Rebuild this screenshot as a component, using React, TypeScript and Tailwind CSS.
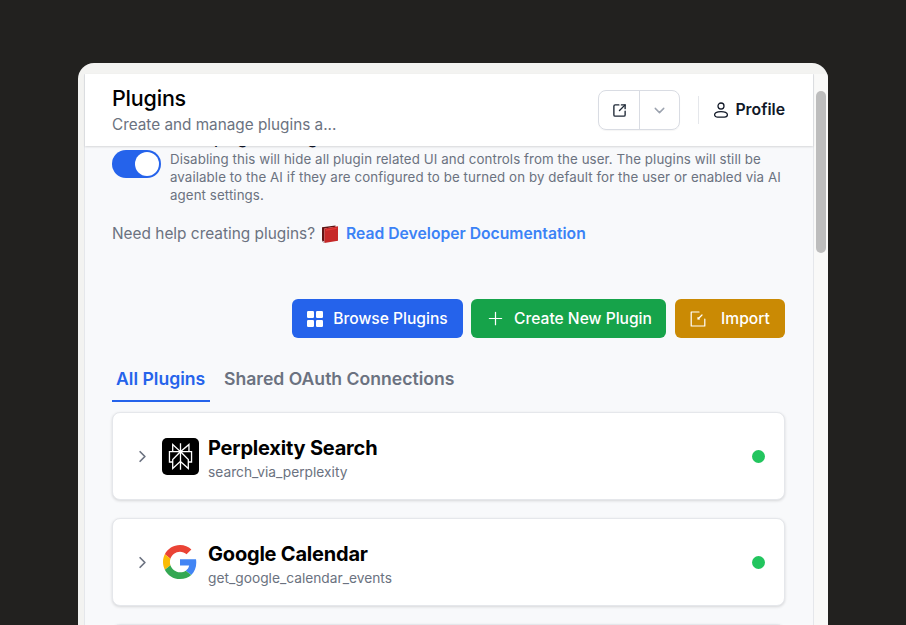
import React from "react";
import { ChevronDown, ChevronRight, Plus, SquareArrowOutUpRight } from "lucide-react";
import { SiPerplexity } from "react-icons/si";

const GoogleLogo = () => (
  <svg viewBox="0 0 48 48" className="-ml-px h-[34px] w-[34px]">
    <path fill="#EA4335" d="M24 9.5c3.54 0 6.71 1.22 9.21 3.6l6.85-6.85C35.9 2.38 30.47 0 24 0 14.62 0 6.51 5.38 2.56 13.22l7.98 6.19C12.43 13.72 17.74 9.5 24 9.5z" />
    <path fill="#4285F4" d="M46.98 24.55c0-1.57-.15-3.09-.38-4.55H24v9.02h12.94c-.58 2.96-2.26 5.48-4.78 7.18l7.73 6c4.51-4.18 7.09-10.36 7.09-17.65z" />
    <path fill="#FBBC05" d="M10.53 28.59c-.48-1.45-.76-2.99-.76-4.59s.27-3.14.76-4.59l-7.98-6.19C.92 16.46 0 20.12 0 24c0 3.88.92 7.54 2.56 10.78l7.97-6.19z" />
    <path fill="#34A853" d="M24 48c6.48 0 11.93-2.13 15.89-5.81l-7.73-6c-2.15 1.45-4.92 2.3-8.16 2.3-6.26 0-11.57-4.22-13.47-9.91l-7.98 6.19C6.51 42.62 14.62 48 24 48z" />
  </svg>
);

const RedBook = () => (
  <svg viewBox="0 0 18 18" className="h-[18px] w-[18px] shrink-0">
    <path fill="#5f1414" d="M1 2.2 14.5.4v1.4L3.4 3.6V18L1 16.2z" />
    <path fill="#c62828" d="M3.4 3.4 17 1.2v14.6L3.4 18z" />
    <path fill="#e53935" d="M5 4.6 15.6 2.8v1.2L5 5.8z" />
    <path fill="#e5e7eb" d="M1.4 15.4 3.4 16.8V18l-2-1.4z" />
  </svg>
);

const GridIcon = () => (
  <svg viewBox="0 0 16 16" className="h-4 w-4 fill-white">
    <rect x="0" y="0" width="7" height="7" rx="1.2" />
    <rect x="9" y="0" width="7" height="7" rx="1.2" />
    <rect x="0" y="9" width="7" height="7" rx="1.2" />
    <rect x="9" y="9" width="7" height="7" rx="1.2" />
  </svg>
);

const ImportIcon = () => (
  <svg viewBox="0 0 16 16" className="h-4 w-4 fill-none stroke-white" strokeWidth="1.2" strokeLinecap="round" strokeLinejoin="round">
    <path d="M9 1H1.2v14h13.6V8" />
    <path d="M8 8l4-4M9.4 8H8V6.6" />
  </svg>
);

const UserIcon = () => (
  <svg viewBox="0 0 16 16" className="h-4 w-4 fill-none stroke-[#111827]" strokeWidth="1.3">
    <circle cx="8" cy="4" r="3" />
    <path d="M1.6 12.8c0-2 2.8-3.2 6.4-3.2s6.4 1.2 6.4 3.2c0 1.5-1.6 2.4-3 2.4H4.6c-1.4 0-3-.9-3-2.4z" />
  </svg>
);

const PluginCard = ({ name, slug, icon }: { name?: string; slug?: string; icon?: React.ReactNode }) => (
  <div className="flex h-[88px] shrink-0 items-center rounded-lg border border-[#e5e7eb] bg-white pl-[20px] pr-[19px] shadow-[0_1px_3px_rgba(0,0,0,0.14)]">
    <ChevronRight className="h-[19px] w-[19px] text-[#6b7280]" strokeWidth={2.2} />
    <div className="ml-[10px] flex h-[37px] w-[37px] items-center justify-center">{icon}</div>
    <div className="ml-[9px] flex-1 pt-[3px]">
      <div className="text-[20px] font-bold leading-[26px] tracking-[-0.2px] text-black">{name}</div>
      <div className="mt-[2px] text-[13.75px] leading-[18px] text-[#6b7280]">{slug}</div>
    </div>
    <div className="h-[13px] w-[13px] rounded-full bg-[#22c55e]" />
  </div>
);

export default function App() {
  return (
    <div className="h-[625px] overflow-hidden bg-[#22211f] px-[78px] pt-[63px] font-['Inter',sans-serif]">
      <div className="flex h-[562px] flex-col overflow-hidden rounded-t-2xl bg-[#f3f3f1] pl-[6px] pt-[11px]">
        <div className="flex min-h-0 flex-1">
          <main className="flex w-[729px] flex-col border-l border-[#e5e7eb] bg-[#f8f9fb]">
            <header className="relative z-10 flex h-[72px] shrink-0 items-center justify-between bg-white pl-[27px] pr-[28px] shadow-[0_1px_2px_rgba(0,0,0,0.14)]">
              <div>
                <h1 className="text-[21.5px] font-medium leading-[28px] tracking-[-0.2px] text-black">Plugins</h1>
                <p className="mt-[2px] text-[15.3px] leading-[22px] text-[#6b7280]">Create and manage plugins a...</p>
              </div>
              <div className="flex items-center">
                <div className="flex h-10 items-center rounded-lg border border-[#d9dce3] shadow-[0_1px_1px_rgba(0,0,0,0.04)]">
                  <div className="flex h-full w-[41px] items-center justify-center border-r border-[#d9dce3]">
                    <SquareArrowOutUpRight className="h-[15px] w-[15px] text-[#1f2937]" strokeWidth={2.2} />
                  </div>
                  <div className="flex h-full w-[39px] items-center justify-center">
                    <ChevronDown className="h-[17px] w-[17px] text-[#9ca3af]" />
                  </div>
                </div>
                <div className="ml-[18px] h-7 w-px bg-[#e5e7eb]" />
                <div className="ml-[14px] flex items-center gap-[6px] text-[15.8px] font-semibold text-[#111827]">
                  <UserIcon />
                  Profile
                </div>
              </div>
            </header>

            <div className="min-h-0 flex-1 overflow-hidden pl-[27px] pr-[28px]">
              <div className="-mt-[16px] h-[20px] text-[16px] font-medium leading-[17px] text-[#111827]">Enable client plugin settings</div>
              <div className="flex">
                <div className="flex h-[28px] w-[49px] shrink-0 items-center justify-end rounded-full bg-[#2563eb] pr-[2px]">
                  <div className="h-6 w-6 rounded-full bg-white" />
                </div>
                <p className="ml-[9px] text-[13.3px] leading-[18px] tracking-[0.09px] text-[#6b7280]">
                  Disabling this will hide all plugin related UI and controls from the user. The plugins will still be available to the AI if they are configured to be turned on by default for the user or enabled via AI agent settings.
                </p>
              </div>

              <div className="mt-[18px] flex items-center text-[15.4px] leading-[24px] text-[#6b7280]">
                Need help creating plugins?
                <span className="ml-[6px] mr-[7px]"><RedBook /></span>
                <span className="text-[15.7px] font-semibold text-[#3b82f6]">Read Developer Documentation</span>
              </div>

              <div className="mt-[53px] flex justify-end text-[15.6px] font-medium text-white">
                <div className="flex h-[39px] w-[171px] items-center justify-center gap-[10px] rounded-md bg-[#2563eb]">
                  <GridIcon />
                  Browse Plugins
                </div>
                <div className="ml-2 flex h-[39px] w-[195px] items-center justify-center gap-[8px] rounded-md bg-[#16a34a]">
                  <Plus className="h-[21px] w-[21px]" strokeWidth={1.4} />
                  Create New Plugin
                </div>
                <div className="ml-[9px] flex h-[39px] w-[110px] items-center justify-center gap-[15px] rounded-md bg-[#ca8a04]">
                  <ImportIcon />
                  Import
                </div>
              </div>

              <div className="mt-[27px] flex items-start text-[17.6px] font-semibold leading-[28px]">
                <div className="h-[37px] w-[98px] border-b-2 border-[#2563eb] pl-[4px] text-[#2563eb]">All Plugins</div>
                <div className="ml-[14px] text-[#6b7280]">Shared OAuth Connections</div>
              </div>

              <div className="mt-[10px] flex flex-col gap-[18px]">
                <PluginCard
                  name="Perplexity Search"
                  slug="search_via_perplexity"
                  icon={
                    <div className="flex h-[37px] w-[37px] items-center justify-center rounded-[5px] bg-black">
                      <SiPerplexity className="h-[27px] w-[27px] text-white" />
                    </div>
                  }
                />
                <PluginCard name="Google Calendar" slug="get_google_calendar_events" icon={<GoogleLogo />} />
                <PluginCard />
              </div>
            </div>
          </main>

          <div className="w-[15px] border-l border-[#e5e7eb] bg-[#f9f9f8] pl-[2px] pr-[2px] pt-[17px]">
            <div className="h-[162px] w-[10px] rounded-full bg-[#bdbdbd]" />
          </div>
        </div>
      </div>
    </div>
  );
}
